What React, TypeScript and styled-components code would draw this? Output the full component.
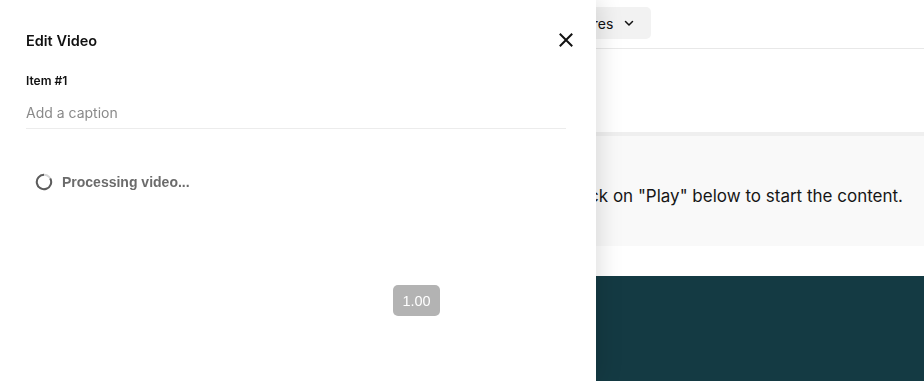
import React from "react";
import styled, { createGlobalStyle } from "styled-components";

const Global = createGlobalStyle`
  html, body { margin: 0; padding: 0; background: #fff; }
  body { font-family: Inter, "Noto Sans", sans-serif; color: #111; }
  #root { width: 924px; height: 381px; overflow: hidden; position: relative; }
`;

const Page = styled.div`
  width: 924px;
  height: 381px;
  display: flex;
  flex-direction: column;
  background: #fff;
`;

const Header = styled.header`
  height: 48px;
  border-bottom: 1px solid #e8e8e8;
  display: flex;
  align-items: center;
  padding-left: 542px;
`;

const NavButton = styled.button`
  height: 32px;
  margin-top: -2px;
  padding: 0 16px 0 14px;
  border: none;
  border-radius: 5px;
  background: #f2f2f2;
  font-family: Inter, sans-serif;
  font-size: 14px;
  color: #111;
  display: flex;
  align-items: center;
  gap: 10px;
`;

const Hero = styled.div`
  height: 83px;
`;

const InfoBand = styled.div`
  border-top: 4px solid #efefef;
  background: #f9f9f9;
  height: 114px;
  display: flex;
  align-items: center;
  justify-content: flex-end;
  padding-right: 21px;
  padding-top: 10px;
  box-sizing: border-box;
  font-size: 17px;
  color: #161616;
`;

const Gap = styled.div`
  height: 30px;
`;

const Stage = styled.div`
  flex: 1;
  background: #143a43;
`;

const Drawer = styled.aside`
  position: fixed;
  left: 0;
  top: 0;
  width: 596px;
  height: 381px;
  background: #fff;
  box-shadow: 4px 0 22px rgba(0, 0, 0, 0.13);
  padding: 0 30px 0 26px;
  box-sizing: border-box;
  display: flex;
  flex-direction: column;
`;

const DrawerHead = styled.div`
  height: 80px;
  display: flex;
  align-items: center;
  justify-content: space-between;
  padding-bottom: 1px;
`;

const Title = styled.h2`
  margin: 0;
  font-family: Inter, sans-serif;
  font-size: 14.5px;
  font-weight: 600;
  color: #111;
`;

const Close = styled.button`
  border: none;
  background: none;
  padding: 0;
  width: 14px;
  height: 14px;
  display: flex;
  margin-right: -7px;
`;

const Label = styled.div`
  margin-top: -8px;
  font-family: Inter, sans-serif;
  font-size: 12px;
  font-weight: 600;
  color: #111;
  line-height: 16px;
`;

const Caption = styled.input`
  margin-top: 14px;
  border: none;
  border-bottom: 1px solid #ececec;
  outline: none;
  padding: 0 0 5px;
  font-family: Inter, sans-serif;
  font-size: 14px;
  line-height: 20px;
  width: 540px;
  color: #111;
  &::placeholder { color: #8a8a8a; }
`;

const Processing = styled.div`
  margin-top: 44px;
  margin-left: 9px;
  display: flex;
  align-items: center;
  gap: 9px;
  font-family: "Liberation Sans", Arial, sans-serif;
  font-size: 14px;
  font-weight: 700;
  color: #6b6b6b;
`;

const Rate = styled.div`
  margin-top: 94px;
  margin-left: 367px;
  width: 47px;
  height: 31px;
  border-radius: 5px;
  background: #b3b3b3;
  color: #fff;
  font-family: "Liberation Sans", Arial, sans-serif;
  font-size: 14.5px;
  display: flex;
  align-items: center;
  justify-content: center;
`;

export default function App() {
  return (
    <>
      <Global />
      <Page>
        <Header>
          <NavButton>
            Features
            <svg width="12" height="12" viewBox="0 0 12 12" fill="none">
              <path d="M2.5 4.5 6 8l3.5-3.5" stroke="#111" strokeWidth="1.5" strokeLinecap="round" strokeLinejoin="round" />
            </svg>
          </NavButton>
        </Header>
        <Hero />
        <InfoBand>Please click on "Play" below to start the content.</InfoBand>
        <Gap />
        <Stage />
      </Page>
      <Drawer>
        <DrawerHead>
          <Title>Edit Video</Title>
          <Close aria-label="Close">
            <svg width="14" height="14" viewBox="0 0 14 14">
              <path d="M1.5 1.5l11 11M12.5 1.5l-11 11" stroke="#111" strokeWidth="2" strokeLinecap="square" />
            </svg>
          </Close>
        </DrawerHead>
        <Label>Item #1</Label>
        <Caption placeholder="Add a caption" />
        <Processing>
          <svg width="18" height="18" viewBox="0 0 18 18">
            <circle cx="9" cy="9" r="7.2" fill="none" stroke="#d6d6d6" strokeWidth="2" />
            <path d="M9 1.8a7.2 7.2 0 1 0 6.2 3.6" fill="none" stroke="#5c5c5c" strokeWidth="2" />
          </svg>
          Processing video...
        </Processing>
        <Rate>1.00</Rate>
      </Drawer>
    </>
  );
}
